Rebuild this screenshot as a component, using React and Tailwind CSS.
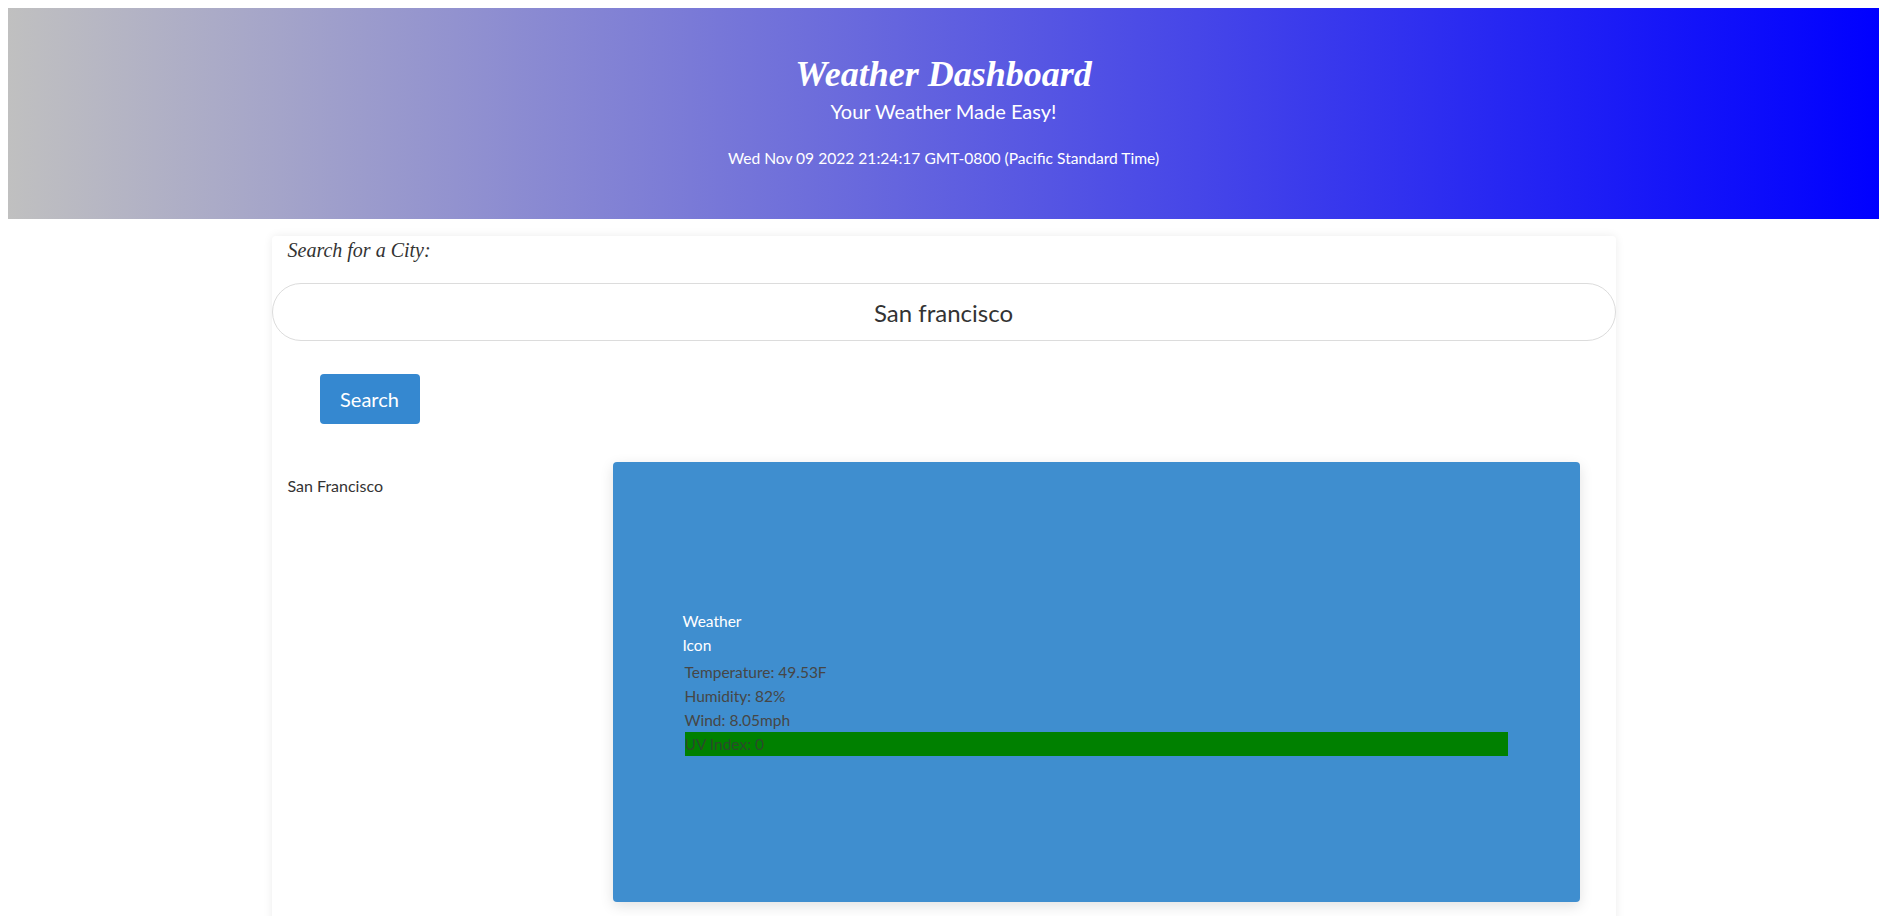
const weather = {
  city: "San Francisco",
  temp: "49.53F",
  humidity: "82%",
  wind: "8.05mph",
  uv: 0,
};

export default function App() {
  return (
    <div className="h-[916px] overflow-hidden bg-white font-['Lato','Open_Sans',sans-serif] text-[#333]">
      {/* Header */}
      <header className="mx-2 mt-2 h-[211px] bg-[linear-gradient(to_right,#c0c0c0,#0000ff)] flex flex-col items-center pt-[45px] text-white">
        <h1 className="font-['Liberation_Serif',serif] italic font-bold text-[36px] leading-[43px]">
          Weather Dashboard
        </h1>
        <p className="text-[20px] leading-[30px]">Your Weather Made Easy!</p>
        <p className="mt-[20px] text-[15.6px] leading-[24px]">
          Wed Nov 09 2022 21:24:17 GMT-0800 (Pacific Standard Time)
        </p>
      </header>

      {/* Main container */}
      <main className="mx-auto mt-[17px] w-[1344px] bg-white rounded-t shadow-[0_0_10px_rgba(0,0,0,0.08)] pb-10">
        <h2 className="pl-4 pt-[2px] font-['Liberation_Serif',serif] italic text-[20px] leading-[24px] text-[#333]">
          Search for a City:
        </h2>

        <input
          type="text"
          defaultValue="San francisco"
          className="mt-[21px] block w-full h-[58px] rounded-full border border-[#dcdcdc] text-center text-[24px] text-[#333] outline-none"
        />

        <button className="ml-[48px] mt-[33px] w-[100px] h-[50px] rounded bg-[#3588d0] text-white text-[20px]">
          Search
        </button>

        <div className="mt-[38px] flex">
          <div className="w-[341px] pl-4 pt-3 text-[16px] leading-[24px]">
            {weather.city}
          </div>

          <div className="w-[967px] h-[440px] rounded bg-[#3f8ecf] shadow-[0_4px_14px_rgba(0,0,0,0.12)] flex items-center justify-center">
            <div className="w-[823px] text-[15.5px] leading-[24px]">
              <div className="w-[60px] -ml-[2px] text-white">Weather Icon</div>
              <div className="mt-[3px] text-[#464646]">
                <p>Temperature: {weather.temp}</p>
                <p>Humidity: {weather.humidity}</p>
                <p>Wind: {weather.wind}</p>
                <p className="bg-[#008000] text-[#2b4b2b]">UV Index: {weather.uv}</p>
              </div>
            </div>
          </div>
        </div>
      </main>
    </div>
  );
}
